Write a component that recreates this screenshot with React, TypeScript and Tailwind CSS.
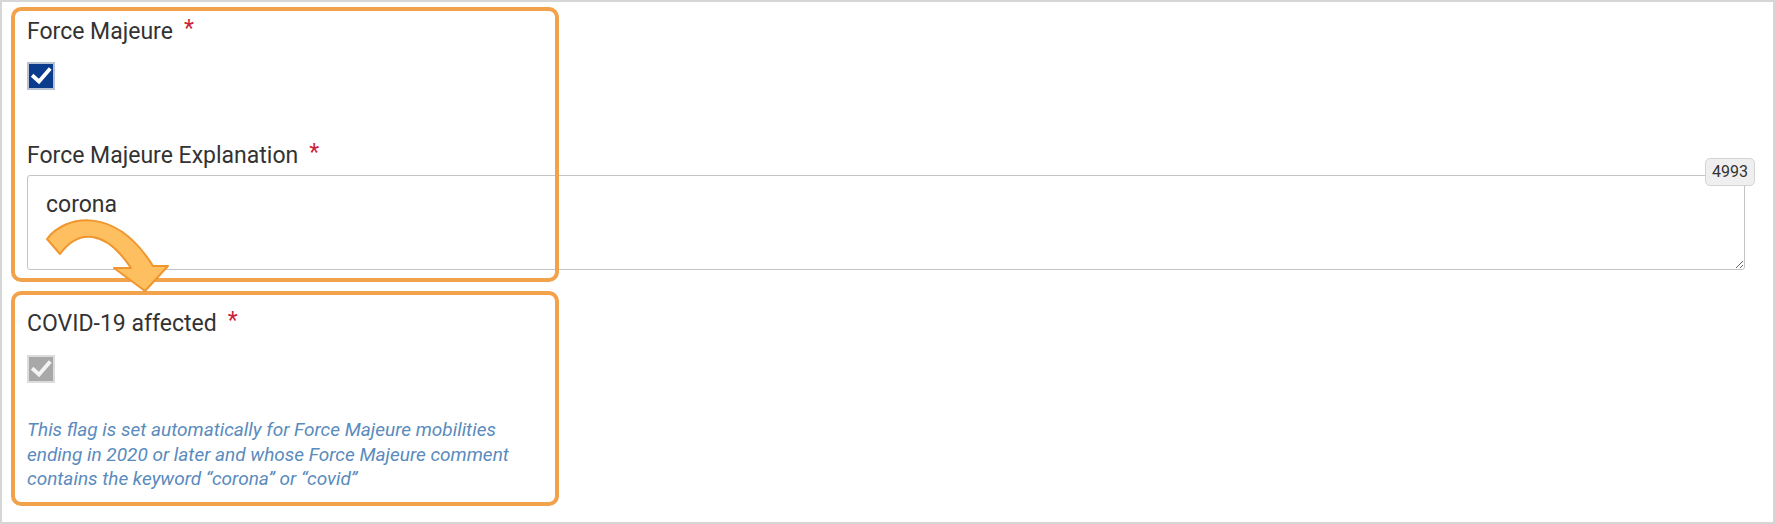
import React from "react";

function Required() {
  return <span className="relative -top-[3px] ml-[11px] text-[#cc1f3a]">*</span>;
}

function CheckMark({ color }: { color: string }) {
  return (
    <svg viewBox="0 0 24 24" className="h-full w-full">
      <path d="M4.5 12.5 L10 17.5 L20 6" fill="none" stroke={color} strokeWidth="3.8" strokeLinecap="square" />
    </svg>
  );
}

function Checkbox({ disabled }: { disabled?: boolean }) {
  return (
    <div
      className={`h-[28px] w-[28px] border-2 ${
        disabled ? "border-[#dcdcdc] bg-[#a8a8a8]" : "border-[#b8c2d2] bg-[#0b3b8c]"
      }`}
    >
      <CheckMark color={disabled ? "#f3f3f3" : "#ffffff"} />
    </div>
  );
}

export default function App() {
  return (
    <div className="relative flex h-[524px] w-full flex-col overflow-hidden border-2 border-[#d6d6d6] bg-white pl-[25px] pr-[28px] pt-4 font-['Roboto',sans-serif] text-[#333]">
      {/* Force Majeure */}
      <div className="flex flex-col items-start gap-[17px]">
        <div className="text-[23px] leading-[27px]">
          Force Majeure
          <Required />
        </div>
        <Checkbox />
      </div>

      <div className="mt-[52px] flex flex-col gap-[6px]">
        <div className="text-[23px] leading-[27px]">
          Force Majeure Explanation
          <Required />
        </div>
        <div className="relative">
          <textarea
            readOnly
            defaultValue="corona"
            className="block h-[95px] w-full rounded-[3px] border border-[#c4c4c4] px-[18px] pt-3 text-[23px] leading-[1.5] text-[#333] outline-none"
          />
          <span className="absolute -right-[10px] -top-[17px] flex h-[28px] w-[50px] items-center justify-center rounded-[5px] border border-[#d3d3d3] bg-[#efefef] text-[16px] text-[#333]">
            4993
          </span>
        </div>
      </div>

      {/* COVID-19 */}
      <div className="mt-[40px] flex flex-col items-start gap-[18px]">
        <div className="text-[23px] leading-[27px]">
          COVID-19 affected
          <Required />
        </div>
        <Checkbox disabled />
      </div>
      <p className="mt-[35px] text-[19px] italic leading-[24.6px] text-[#5a8bbd]">
        This flag is set automatically for Force Majeure mobilities
        <br />
        ending in 2020 or later and whose Force Majeure comment
        <br />
        contains the keyword “corona” or “covid”
      </p>

      {/* annotation overlay */}
      <div className="pointer-events-none absolute left-[9px] top-[5px] h-[275px] w-[548px] rounded-[10px] border-4 border-[#f2a24a]" />
      <div className="pointer-events-none absolute left-[9px] top-[289px] h-[215px] w-[548px] rounded-[10px] border-4 border-[#f2a24a]" />
      <svg className="pointer-events-none absolute left-0 top-0" width="200" height="300" viewBox="2 2 200 300">
        <path
          d="M47 239 C65 215 115 205 153 266 L168 266 L145 291 L114 268 L131 268 C105 229 78 229 60 254 Z"
          fill="#fdbf5f"
          stroke="#f0962e"
          strokeWidth="2"
          strokeLinejoin="round"
        />
      </svg>
    </div>
  );
}
